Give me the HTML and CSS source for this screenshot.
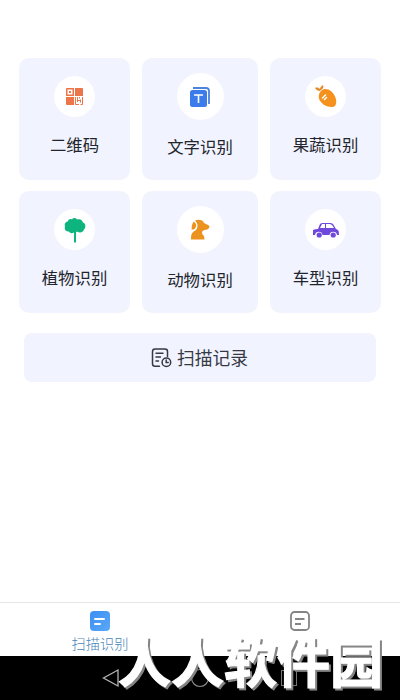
FILE: index.html
```
<!DOCTYPE html>
<html lang="zh-CN">
<head>
<meta charset="utf-8">
<title>扫描识别</title>
<link rel="stylesheet" href="styles.css">
</head>
<body>
<div class="app">
  <main class="content">
    <section class="grid">
      <div class="card">
        <div class="disc"><svg width="20" height="20" viewBox="0 0 20 20"><path fill="#ec7549" fill-rule="evenodd" d="M2 1h7v8H1V2q0-1 1-1zm.5 1.500v5h5v-5zM4 4h2v2H4zM10 1h7q1 0 1 1v7h-8zM1 10h8v8H2q-1 0-1-1z"/><path fill="none" stroke="#ec7549" d="M10.500 10v7.500H14M12.500 10v5M12.500 13.500H15M17.500 10v7.500H15.500M14.500 10v1.500M15.500 12.500v3"/></svg></div>
        <span class="label">二维码</span>
      </div>
      <div class="card">
        <div class="disc large"><svg width="22" height="22" viewBox="0 0 22 22"><rect x="1" y="4" width="17" height="17" rx="2.500" fill="#3c7bea"/><path fill="none" stroke="#4c83dc" stroke-width="1.800" d="M4 2h13q3 0 3 3v13"/><path fill="none" stroke="#fff" stroke-width="1.600" d="M5 9h9M9.500 9v8"/></svg></div>
        <span class="label">文字识别</span>
      </div>
      <div class="card">
        <div class="disc"><svg width="24" height="24" viewBox="0 0 24 24"><path fill="#f5921e" d="M7 6c3-3 7-2 10 0 4 4 6 8 5 13q-1 3-3 3c-5 0-9-1-12-5C4 14 4 9 7 6z"/><path fill="#e58a2b" d="M6 6C4 6 2 5 1 3c2-1 4 0 5 1 0-1 1-3 3-4 1 2 0 4-2 5z"/><path stroke="#fff" stroke-width="1.500" stroke-linecap="round" d="M8.500 13l3-3M10.500 14.500l2-2"/></svg></div>
        <span class="label">果蔬识别</span>
      </div>
      <div class="card">
        <div class="disc"><svg width="24" height="28" viewBox="0 0 24 28"><path fill="#0eb47d" d="M9 3.500c1-2 4-2 5 0 3-1 5 0 6 3 3 1 3 5 1 7-1 3-4 4-7 2l-1 1V26.500h-2V16.500c-2 1-4 1-5-1-3 0-5-2-4-5-1-3 1-5 3-5 0-2 2-3 4-2z"/></svg></div>
        <span class="label">植物识别</span>
      </div>
      <div class="card">
        <div class="disc large"><svg width="22" height="22" viewBox="0 0 22 22"><path fill="#ec931f" d="M6 1.500c4-1.500 8-.5 9 2.500l4 2q1.500.5 1.500 2-1 3-5 3l-2 1c-1 2 0 4 1.500 5l.5 3.500H2c0-3 0-6 2.500-8C9 11 10 5 6 1.500z"/><path fill="#ec931f" d="M4.500 2.500c4 2 3 7 0 8H2.500q0-5 2-8z"/></svg></div>
        <span class="label">动物识别</span>
      </div>
      <div class="card">
        <div class="disc"><svg width="28" height="18" viewBox="0 0 28 18"><path fill="#6f49dc" fill-rule="evenodd" d="M8 3q1-1 3-1h7q2 0 3 1l3 5 2 1q1 1 1 5h-2a3.800 3.800 0 0 0-7.500 0h-7a3.800 3.800 0 0 0-7.500 0H1V9q2-1 5-1zM8 7h5V3h-3zM14 3v4h8l-2-3-2-1z"/><circle cx="7.200" cy="14" r="2.600" fill="#6f49dc"/><circle cx="21.200" cy="14" r="2.600" fill="#6f49dc"/></svg></div>
        <span class="label">车型识别</span>
      </div>
    </section>
    <div class="history">
      <svg width="22" height="22" viewBox="0 0 22 22" fill="none" stroke="#363944" stroke-width="1.500" stroke-linecap="round"><path d="M8.500 19.200H4q-2.500 0-2.500-2.500v-12Q1.500 2 4 2h10q2.500 0 2.500 2.500v5M5 6.200h7M5 10h4.500M5 14h2.500"/><circle cx="15.400" cy="15.200" r="4.300"/><path d="M15.200 13v2.600h2"/></svg>
      <span>扫描记录</span>
    </div>
  </main>
  <nav class="tabs">
    <div class="tab active"><svg width="20" height="20" viewBox="0 0 20 20"><defs><linearGradient id="blue" x2="1" y2="1"><stop stop-color="#3b8ff1"/><stop offset="1" stop-color="#5aa8f9"/></linearGradient></defs><rect width="20" height="20" rx="4" fill="url(#blue)"/><path stroke="#fff" stroke-width="2" stroke-linecap="round" d="M5 8h9M5 13h5"/></svg><span>扫描识别</span></div>
    <div class="tab"><svg width="20" height="20" viewBox="0 0 20 20" fill="none" stroke="#858585" stroke-width="1.800"><rect x="1" y="1" width="18" height="18" rx="3.500"/><path d="M5 8h9.500M5 13h6"/></svg></div>
  </nav>
  <footer class="system">
    <svg width="18" height="20" viewBox="0 0 18 20"><path fill="none" stroke="#b5b5b5" stroke-width="1.300" d="M16 2v16L1.500 10z"/></svg>
    <svg width="20" height="20" viewBox="0 0 20 20"><circle cx="10" cy="10" r="8.500" fill="none" stroke="#8a8a8a" stroke-width="1.200"/></svg>
    <svg width="18" height="20" viewBox="0 0 18 20"><rect x="1.500" y="2.500" width="15" height="15" fill="none" stroke="#777"/></svg>
  </footer>
  <div class="watermark">人人软件园</div>
</div>
</body>
</html>
```
FILE: styles.css
```
* { box-sizing: border-box; }
body { margin: 0; font-family: "Noto Sans CJK SC", sans-serif; background: #fff; }
.app { position: relative; width: 400px; height: 700px; display: flex; flex-direction: column; overflow: hidden; }
.content { flex: 1; padding: 58px 19px 0; }
.grid { display: grid; grid-template-columns: 111px 116px 111px; column-gap: 12px; row-gap: 11px; grid-auto-rows: 122px; }
.card { background: #f1f3fe; border-radius: 10px; display: flex; flex-direction: column; align-items: center; padding-top: 18px; }
.disc { width: 41px; height: 41px; border-radius: 50%; background: #fff; display: flex; align-items: center; justify-content: center; flex: none; }
.disc.large { width: 47px; height: 47px; margin-top: -3px; }
.label { font-size: 16.400px; line-height: 24px; margin-top: 15px; color: #22252d; white-space: nowrap; }
.disc.large + .label { margin-top: 14px; }
.history { height: 49px; margin: 20px 5px 0; background: #f1f3fe; border-radius: 8px; display: flex; align-items: center; justify-content: center; gap: 4px; font-size: 17.800px; color: #363944; }
.history span { margin: -2px 1px 0 0; }
.tabs { height: 54px; border-top: 1px solid #e6e6e6; display: flex; }
.tab { flex: 1; display: flex; flex-direction: column; align-items: center; padding-top: 8px; }
.tab svg { flex: none; }
.tab span { font-size: 14.200px; line-height: 20px; margin-top: 2px; color: #4784b8; font-weight: 300; }
.system { height: 44px; background: #000; display: flex; align-items: center; justify-content: center; gap: 70px; }
.watermark { position: absolute; left: 118px; top: 630px; font-size: 53px; line-height: 60px; font-weight: 700; color: #fff; -webkit-text-stroke: 1.2px #fff; filter: drop-shadow(2px 2px 0 #858585); white-space: nowrap; }
```
